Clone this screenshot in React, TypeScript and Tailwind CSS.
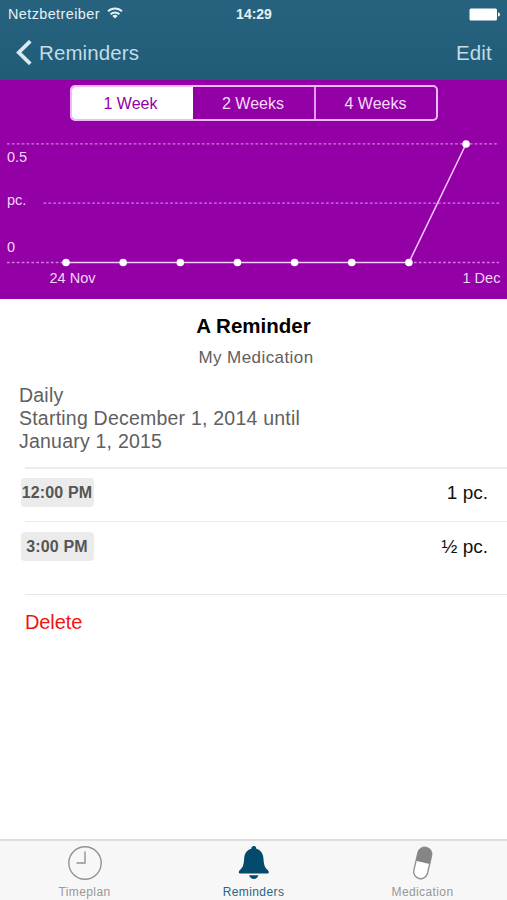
import { useState } from "react";
import clsx from "clsx";

const RANGES = ["1 Week", "2 Weeks", "4 Weeks"];

const DOSES = [
  { time: "12:00 PM", amount: "1 pc." },
  { time: "3:00 PM", amount: "½ pc." },
];

// Amount taken per day, 24 Nov - 1 Dec
const HISTORY = [0, 0, 0, 0, 0, 0, 0, 0.5];

const CHART_BASE = 141.5;
const CHART_TOP = 23;

const StatusBar = () => (
  <div className="grid h-7 grid-cols-3 items-center pl-2 pr-[7px] text-[14px] text-[#e6f1f5]">
    <div className="flex items-center gap-[7px]">
      <span className="text-[14.4px] leading-5 whitespace-nowrap tracking-[0.42px]">Netzbetreiber</span>
      <svg className="-mt-[3px]" width="16" height="12" viewBox="0 0 16 12" fill="none" stroke="currentColor" strokeWidth="2">
        <path d="M1 4.4a10 10 0 0 1 14 0" />
        <path d="M3.6 7.2a6.3 6.3 0 0 1 8.8 0" />
        <path d="M8 11.6 5.4 9a3.7 3.7 0 0 1 5.2 0Z" fill="currentColor" stroke="none" />
      </svg>
    </div>
    <span className="text-center font-bold">14:29</span>
    <svg className="justify-self-end" width="31" height="13" viewBox="0 0 31 13" fill="white">
      <rect x="0.5" y="0.5" width="27.5" height="12" rx="1.5" />
      <path d="M29 4.5a2 2 0 0 1 0 4Z" />
    </svg>
  </div>
);

const NavBar = () => (
  <div className="flex h-[52px] items-center justify-between pb-[3px] pl-4 pr-[15px] text-[20.5px] text-[#c3dce6]">
    <button className="flex items-center gap-[7px]">
      <svg width="16" height="25" viewBox="0 0 16 25" fill="none" stroke="#d8eaf0" strokeWidth="3.8">
        <path d="M14.3 1.2 2.8 12.5l11.5 11.3" />
      </svg>
      <span className="pt-px tracking-[0.1px]">Reminders</span>
    </button>
    <button className="pt-px tracking-[0.2px]">Edit</button>
  </div>
);

const HistoryChart = () => {
  const points = HISTORY.map((value, index) => ({
    x: 66 + index * 57.15,
    y: CHART_BASE - (value / 0.5) * (CHART_BASE - CHART_TOP),
  }));

  return (
    <svg className="block" width="507" height="178" viewBox="0 0 507 178">
      <g stroke="#d07ae0" strokeWidth="1.3" strokeDasharray="2.8 2.07">
        <path d="M7 22.8H499" />
        <path d="M43.5 82.1H501" />
        <path d="M7 141.5H66M409 141.5H499" />
      </g>
      <polyline
        points={points.map((p) => `${p.x},${p.y}`).join(" ")}
        fill="none"
        stroke="#f8ccff"
        strokeWidth="1.5"
      />
      {points.map((p) => (
        <circle key={p.x} cx={p.x} cy={p.y} r="3.8" fill="white" />
      ))}
      <g fill="#f6d5fb" fontSize="14.5">
        <text x="7" y="41">0.5</text>
        <text x="7" y="84">pc.</text>
        <text x="7" y="131">0</text>
        <text x="49.5" y="162">24 Nov</text>
        <text x="462.5" y="162">1 Dec</text>
      </g>
    </svg>
  );
};

const TABS = [
  {
    label: "Timeplan",
    icon: (
      <svg width="36" height="36" viewBox="0 0 36 36" fill="none" stroke="#939393" strokeWidth="1.4">
        <circle cx="18" cy="18" r="16.2" />
        <path d="M18 6.5V18H9.5" />
      </svg>
    ),
  },
  {
    label: "Reminders",
    icon: (
      <svg width="36" height="36" viewBox="0 0 36 36" fill="#044a6c">
        <path d="M17.8 1.1c1.5 0 2.5 1 2.5 2.7 4.3 1.2 6.7 4.6 7.1 9.2.5 6.3.9 9.3 4.3 12 1.4 1.2 1.6 3.5-.4 3.5H4.3c-2 0-1.8-2.3-.4-3.5 3.4-2.7 3.8-5.7 4.3-12 .4-4.6 2.8-8 7.1-9.2 0-1.7 1-2.7 2.5-2.7Z" />
        <path d="M13.2 30.3h9.2c-.8 2.5-2.4 3.7-4.6 3.7s-3.8-1.2-4.6-3.7Z" />
      </svg>
    ),
  },
  {
    label: "Medication",
    icon: (
      <svg width="36" height="36" viewBox="0 0 36 36">
        <g transform="rotate(13 18 18)">
          <rect x="10.7" y="2" width="14" height="32" rx="7" fill="white" stroke="#939393" strokeWidth="1.4" />
          <path d="M10.7 17.5V9a7 7 0 0 1 14 0v8.5Z" fill="#858585" />
        </g>
      </svg>
    ),
  },
];

export default function App() {
  const [range, setRange] = useState(RANGES[0]);
  const [tab, setTab] = useState("Reminders");

  return (
    <div className="flex h-[900px] w-[507px] flex-col overflow-hidden bg-white font-['Liberation_Sans',Arial,sans-serif]">
      <header className="bg-linear-to-b from-[#27637f] to-[#205b77]">
        <StatusBar />
        <NavBar />
      </header>

      <section className="h-[219px] bg-[#9200a6] pt-[5px]">
        <div className="mx-auto grid h-9 w-[368px] grid-cols-[121px_123px_120px] overflow-hidden rounded-[5px] border-2 border-[#f0b8fa]">
          {RANGES.map((item, index) => (
            <button
              key={item}
              onClick={() => setRange(item)}
              className={clsx(
                "pt-px text-[16px]",
                index === 0 && "pr-[3px]",
                index === 1 && "border-r-2 border-[#e49cf0]",
                item === range ? "bg-white text-[#9200a6]" : "text-[#f8d8fc]"
              )}
            >
              {item}
            </button>
          ))}
        </div>
        <HistoryChart />
      </section>

      <main className="flex-1">
        <div className="pt-[15px] text-center">
          <h1 className="text-[20.5px] leading-6 font-bold text-black">A Reminder</h1>
          <p className="mt-[10px] pl-[5px] text-[17px] leading-5 tracking-[0.42px] text-[#606060]">My Medication</p>
        </div>
        <p className="mt-4 ml-[19px] w-[300px] text-[19.5px] leading-[23px] tracking-[0.22px] text-[#606060]">
          Daily
          <br />
          Starting December 1, 2014 until January 1, 2015
        </p>

        <ul className="mt-[14px]">
          {DOSES.map((dose, index) => (
            <li key={dose.time}>
              <div className="ml-[25px] h-[1.5px] bg-[#ececec]" />
              <div
                className={clsx(
                  "flex items-start justify-between pr-[19px] pl-[20.5px]",
                  index === DOSES.length - 1 ? "h-[72px] pt-[9.5px]" : "h-[52px] pt-[9px]"
                )}
              >
                <span className="flex h-[29.5px] w-[73px] items-center justify-center rounded-[4px] bg-[#ebebeb] pt-px text-[16px] font-bold tracking-[0.15px] whitespace-nowrap text-[#555]">
                  {dose.time}
                </span>
                <span className="text-[19px] leading-[29px] text-[#111]">{dose.amount}</span>
              </div>
            </li>
          ))}
        </ul>
        <div className="ml-[25px] border-t border-[#e6e6e6] pt-[15px]">
          <button className="text-[20px] leading-6 tracking-[-0.1px] text-[#f01414]">Delete</button>
        </div>
      </main>

      <nav className="grid h-[61px] grid-cols-3 border-t-2 border-[#dedede] bg-[#f7f7f7]">
        {TABS.map((item) => (
          <button
            key={item.label}
            onClick={() => setTab(item.label)}
            className={clsx(
              "flex flex-col items-center pt-1 text-[12px] tracking-[0.4px]",
              item.label === tab ? "text-[#2b6580]" : "text-[#989898]"
            )}
          >
            {item.icon}
            <span className="mt-[3px] leading-4">{item.label}</span>
          </button>
        ))}
      </nav>
    </div>
  );
}
